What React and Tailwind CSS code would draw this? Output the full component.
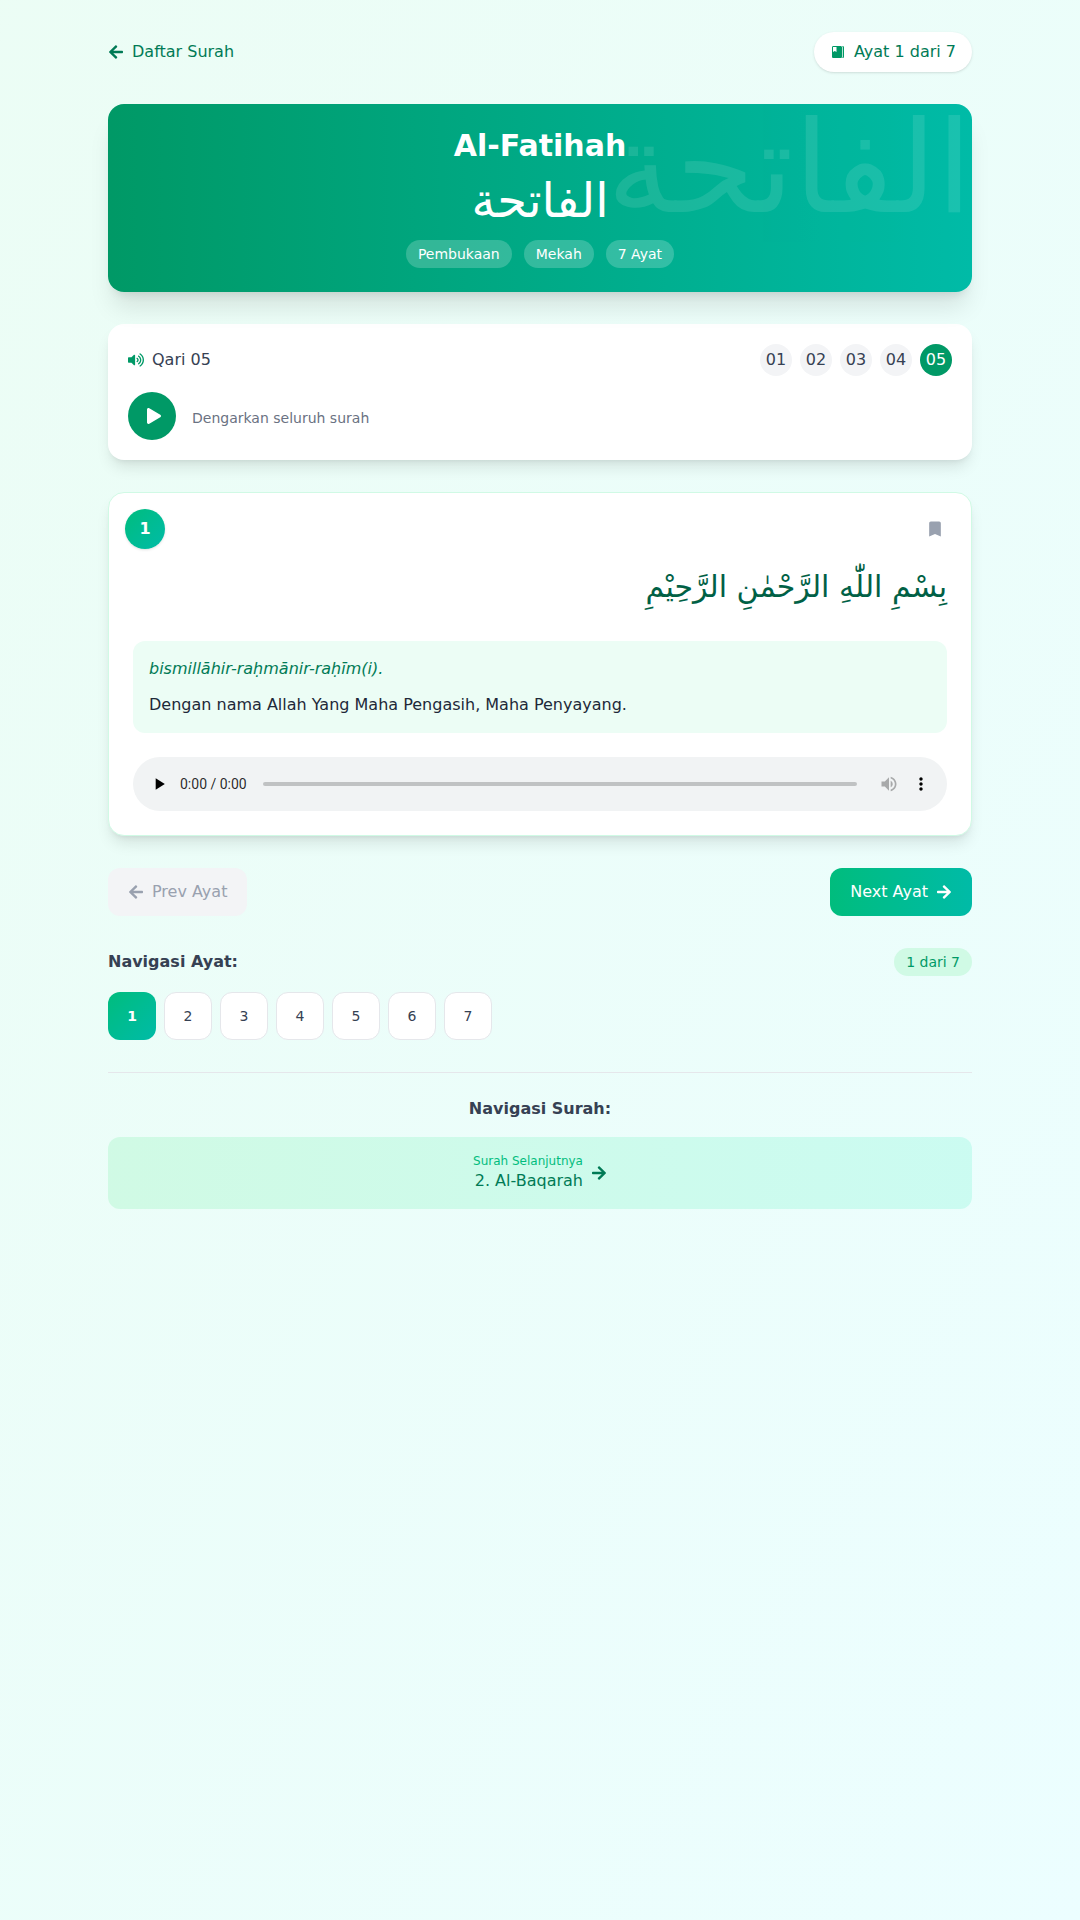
import { FaArrowLeft, FaArrowRight, FaPlay, FaVolumeUp } from "react-icons/fa";
import { IoMdBookmarks } from "react-icons/io";
import { MdBookmark, MdMoreVert, MdPlayArrow, MdVolumeUp } from "react-icons/md";

const qaris = ["01", "02", "03", "04", "05"];
const verses = [1, 2, 3, 4, 5, 6, 7];
const tags = ["Pembukaan", "Mekah", "7 Ayat"];

function TopBar() {
  return (
    <header className="mb-8 flex items-center justify-between text-emerald-700">
      <a className="flex items-center gap-2">
        <FaArrowLeft />
        Daftar Surah
      </a>
      <div className="flex items-center gap-2 rounded-full bg-white px-4 py-2 shadow">
        <IoMdBookmarks className="text-emerald-600" />
        Ayat 1 dari 7
      </div>
    </header>
  );
}

function SurahBanner() {
  return (
    <section className="relative mb-8 overflow-hidden rounded-2xl bg-gradient-to-r from-emerald-600 to-teal-500 p-6 text-center text-white shadow-xl">
      <div className="absolute top-0 right-0 text-9xl leading-none opacity-10">الفاتحة</div>
      <h1 className="relative mb-3 text-3xl font-bold">Al-Fatihah</h1>
      <p className="relative mb-4 text-5xl">الفاتحة</p>
      <div className="relative flex justify-center gap-3 text-sm">
        {tags.map((tag) => (
          <span key={tag} className="rounded-full bg-white/20 px-3 py-1">{tag}</span>
        ))}
      </div>
    </section>
  );
}

function QariCard() {
  return (
    <section className="mb-8 rounded-2xl bg-white p-5 shadow-lg">
      <div className="mb-4 flex items-center justify-between text-gray-700">
        <div className="flex items-center gap-2">
          <FaVolumeUp className="text-emerald-600" />
          Qari 05
        </div>
        <div className="flex gap-2">
          {qaris.map((q) => (
            <button
              key={q}
              className={
                q === "05"
                  ? "flex size-8 items-center justify-center rounded-full bg-emerald-600 text-white"
                  : "flex size-8 items-center justify-center rounded-full bg-gray-100"
              }
            >
              {q}
            </button>
          ))}
        </div>
      </div>
      <div className="flex items-center gap-4">
        <button className="flex size-12 items-center justify-center rounded-full bg-emerald-600 text-white">
          <FaPlay className="ml-1" />
        </button>
        <span className="mt-1 text-sm text-gray-500">Dengarkan seluruh surah</span>
      </div>
    </section>
  );
}

function AudioPlayer() {
  return (
    <div className="flex h-[54px] items-center rounded-full bg-[#f1f3f4] px-4 text-black">
      <MdPlayArrow className="size-5 shrink-0" />
      <span className="ml-[11px] w-[83px] shrink-0 font-['Roboto',sans-serif] text-sm text-black/85">0:00 / 0:00</span>
      <div className="h-1 flex-1 rounded-full bg-black/20" />
      <MdVolumeUp className="ml-[22px] size-5 shrink-0 text-black/30" />
      <MdMoreVert className="ml-3 size-5 shrink-0" />
    </div>
  );
}

function VerseCard() {
  return (
    <article className="relative mb-8 rounded-2xl border border-emerald-100 bg-white px-6 pt-16 pb-6 shadow-lg">
      <div className="absolute top-4 left-4 flex size-10 items-center justify-center rounded-full bg-gradient-to-br from-emerald-500 to-teal-500 font-bold text-white shadow">
        1
      </div>
      <button className="absolute top-4 right-4 flex size-10 items-center justify-center text-gray-400">
        <MdBookmark className="size-5" />
      </button>
      <p dir="rtl" className="mb-6 text-3xl leading-[60px] text-emerald-800">بِسْمِ اللّٰهِ الرَّحْمٰنِ الرَّحِيْمِ</p>
      <div className="mb-6 rounded-xl bg-emerald-50 p-4">
        <p className="mb-3 text-emerald-700 italic">bismillāhir-raḥmānir-raḥīm(i).</p>
        <p className="text-gray-800">Dengan nama Allah Yang Maha Pengasih, Maha Penyayang.</p>
      </div>
      <AudioPlayer />
    </article>
  );
}

function VerseNavigation() {
  return (
    <>
      <div className="mb-8 flex justify-between">
        <button className="flex items-center gap-2 rounded-xl bg-gray-100 px-5 py-3 text-gray-400">
          <FaArrowLeft />
          Prev Ayat
        </button>
        <button className="flex items-center gap-2 rounded-xl bg-gradient-to-r from-emerald-500 to-teal-500 px-5 py-3 text-white">
          Next Ayat
          <FaArrowRight />
        </button>
      </div>
      <div className="mb-4 flex items-center justify-between">
        <h3 className="font-bold text-gray-700">Navigasi Ayat:</h3>
        <span className="rounded-full bg-emerald-100 px-3 py-1 text-sm text-emerald-600">1 dari 7</span>
      </div>
      <div className="mb-8 flex gap-2 text-sm">
        {verses.map((n) => (
          <button
            key={n}
            className={
              n === 1
                ? "size-12 rounded-xl bg-gradient-to-br from-emerald-500 to-teal-500 font-bold text-white"
                : "size-12 rounded-xl border border-gray-200 bg-white text-gray-700"
            }
          >
            {n}
          </button>
        ))}
      </div>
    </>
  );
}

function SurahNavigation() {
  return (
    <nav className="border-t border-gray-200 pt-6">
      <h3 className="mb-4 text-center font-bold text-gray-700">Navigasi Surah:</h3>
      <a className="flex items-center justify-center gap-2 rounded-xl bg-gradient-to-r from-emerald-100 to-teal-100 py-4 text-emerald-700">
        <div className="text-right">
          <div className="text-xs text-emerald-500">Surah Selanjutnya</div>
          <div>2. Al-Baqarah</div>
        </div>
        <FaArrowRight />
      </a>
    </nav>
  );
}

export default function App() {
  return (
    <div className="min-h-screen bg-gradient-to-br from-emerald-50 to-cyan-50 py-8 font-['DejaVu_Sans',sans-serif]">
      <main className="mx-auto w-[864px]">
        <TopBar />
        <SurahBanner />
        <QariCard />
        <VerseCard />
        <VerseNavigation />
        <SurahNavigation />
      </main>
    </div>
  );
}
